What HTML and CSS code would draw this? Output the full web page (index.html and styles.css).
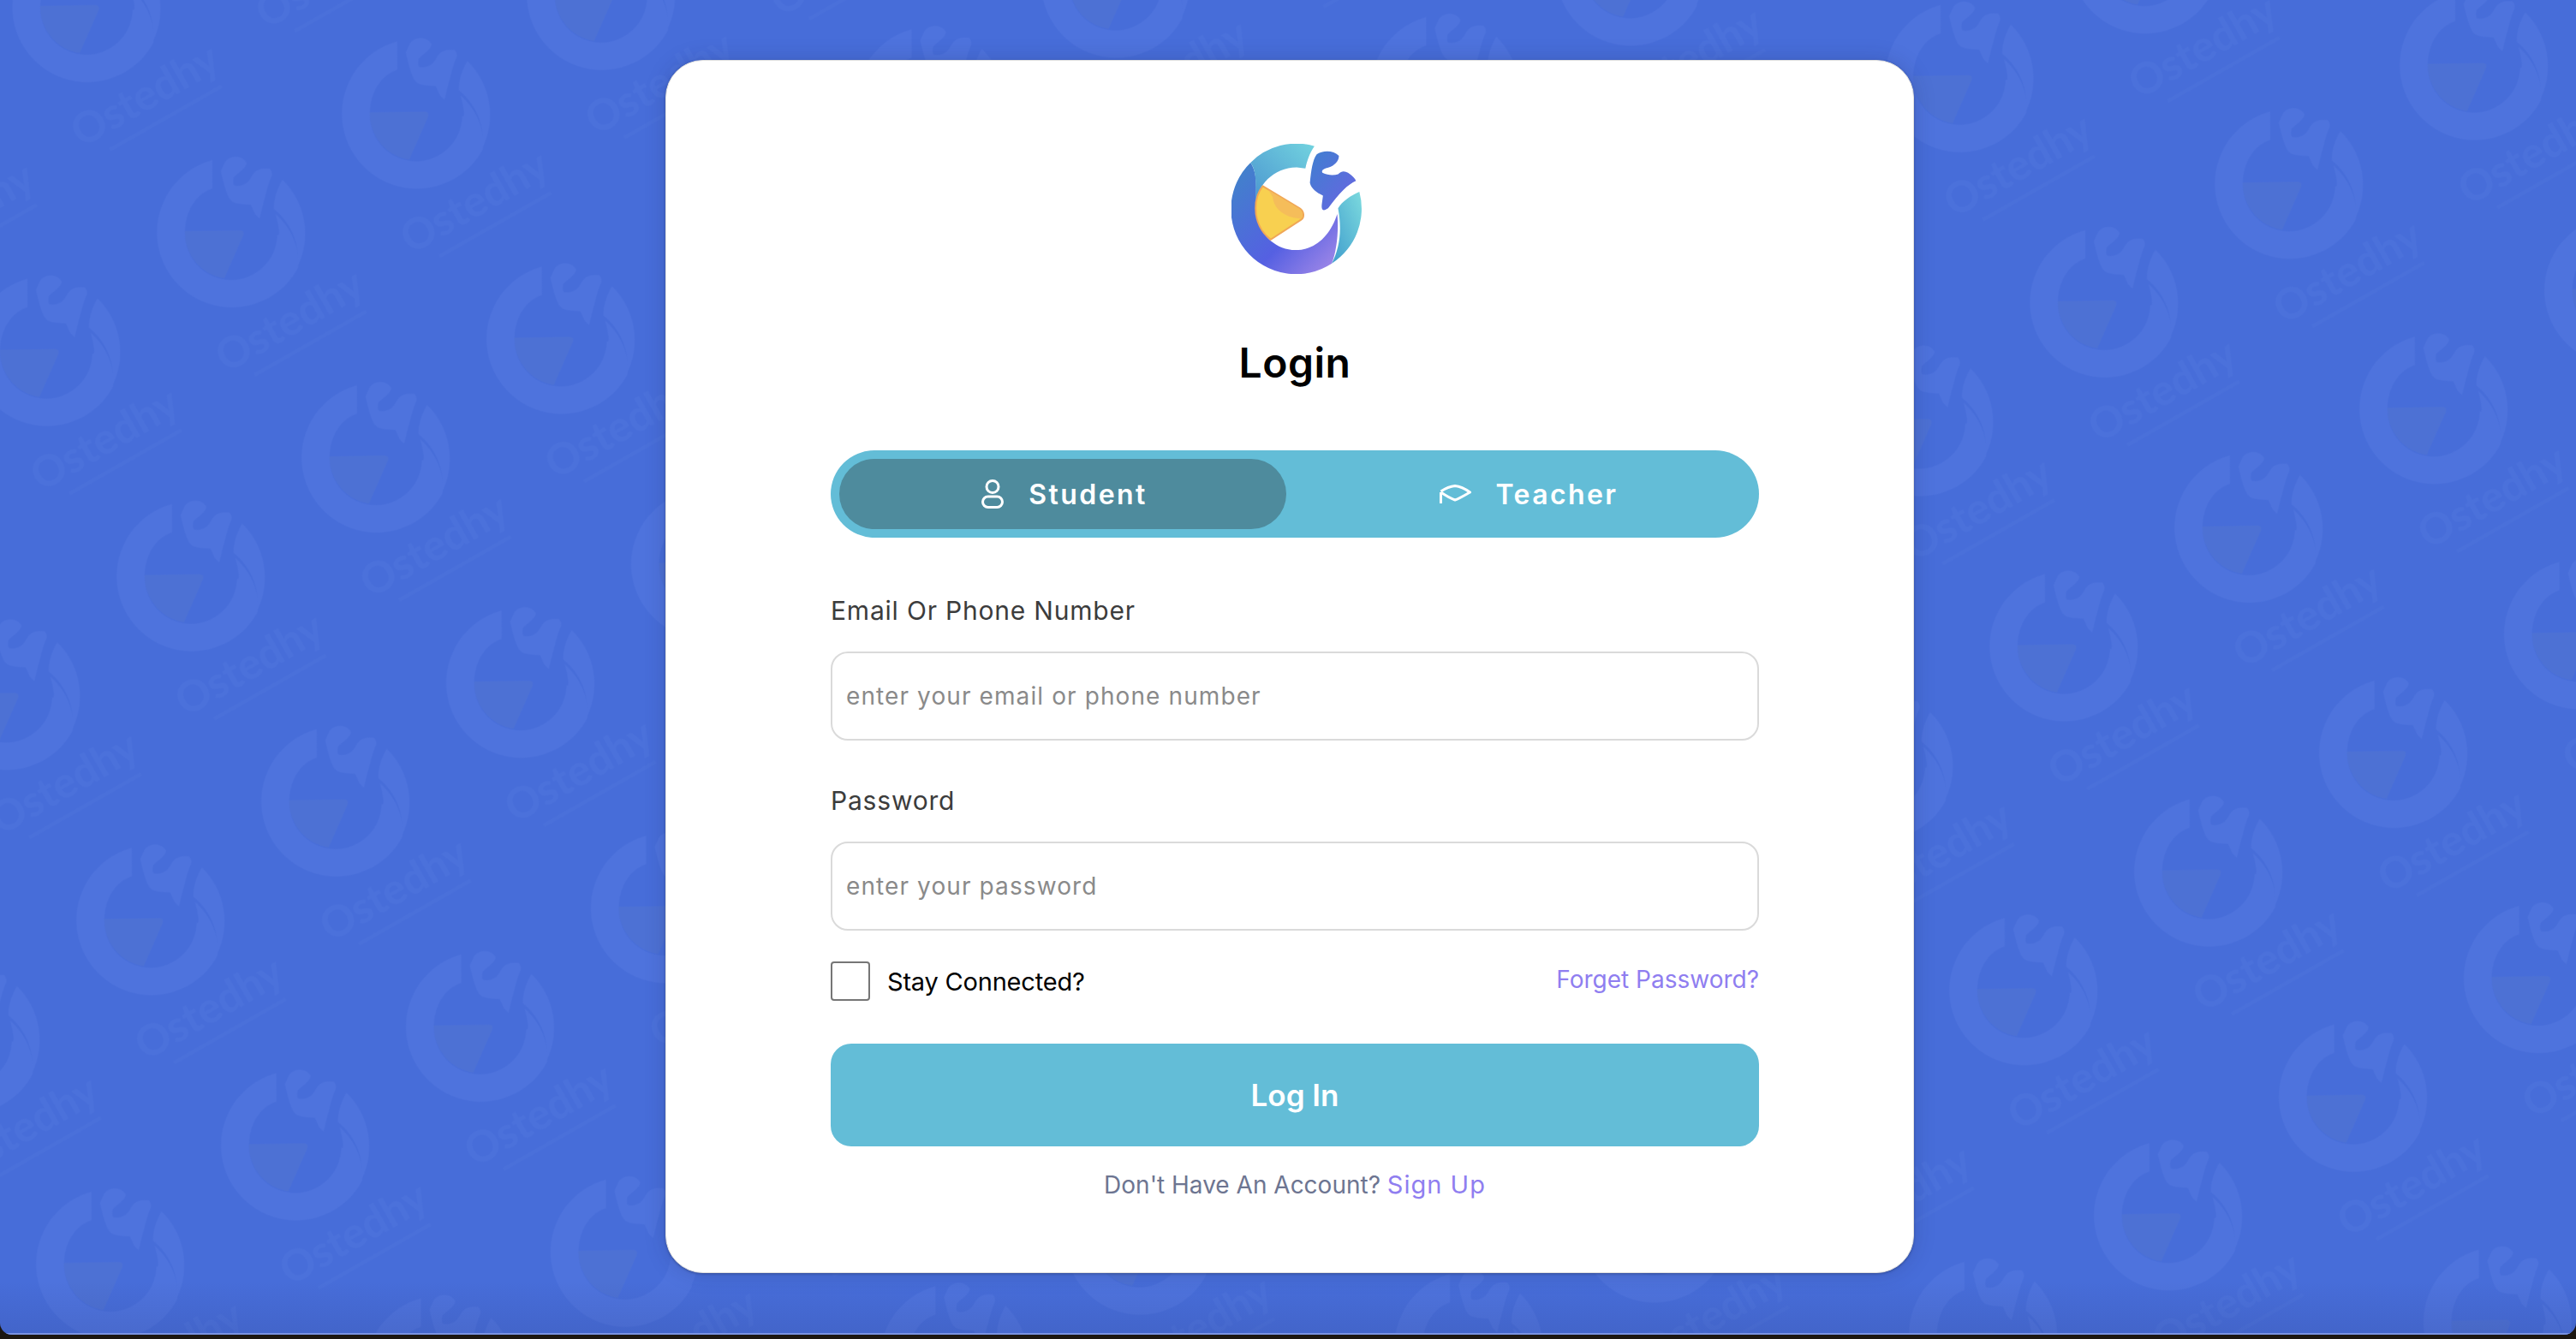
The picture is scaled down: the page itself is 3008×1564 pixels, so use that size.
FILE: index.html
```html
<!DOCTYPE html>
<html lang="en">
<head>
<meta charset="utf-8">
<title>Login</title>
<link rel="stylesheet" href="styles.css">
</head>
<body>
<div class="screen">
  <svg class="wallpaper" width="3008" height="1560" aria-hidden="true">
    <defs>
      <pattern id="wm" patternUnits="userSpaceOnUse" width="256.6" height="312.6" patternTransform="translate(109 256.5) rotate(-32.7)">
        <g transform="translate(127 100) rotate(32.7)">
          <path class="wm-a" d="M-22 -85 A87.500 87.500 0 1 0 78 41 C80 25 76 0 52 -22 C58 0 56 5 54 2 A54 54 0 0 1 -54 0 C-54 -25 -42 -45 -22 -52 Z"/>
          <path class="wm-a" d="M60 -62 A87.500 87.500 0 0 1 78 38 C80 15 72 -10 50 -28 C50 -40 54 -52 60 -62 Z"/>
          <path class="wm-a" d="M-7 -83 C-2 -90 12 -92 18 -82 C18 -76 8 -70 3 -65 C2 -60 2 -55 5 -55 C14 -54 20 -58 24 -66 C28 -74 34 -76 45 -75 C48 -72 48 -68 47 -66 C42 -55 38 -35 33 -17 L28 -22 L23 -33 C10 -33 2 -35 0 -38 C-6 -44 -10 -65 -12 -72 Z"/>
          <path class="wm-b" d="M-54 -2 L10 -3 Q16 -3 14 3 L-8 53 A54 54 0 0 1 -54 -2 Z"/>
        </g>
        <g transform="rotate(3 129 226)">
          <text class="wm-word" x="129" y="240" text-anchor="middle">Ostedhy</text>
          <rect class="wm-line" x="62" y="256" width="150" height="4"/>
        </g>
      </pattern>
      <linearGradient id="c1" x1="0" y1="0" x2="1" y2="1">
        <stop offset="0" stop-color="#3f86c8"/><stop offset=".6" stop-color="#5560e2"/><stop offset="1" stop-color="#a88ce8"/>
      </linearGradient>
      <linearGradient id="c2" x1="1" y1="0" x2="0" y2="1">
        <stop offset="0" stop-color="#72d3df"/><stop offset="1" stop-color="#4a93cf"/>
      </linearGradient>
      <linearGradient id="c3" x1="0" y1="0" x2="1" y2="1">
        <stop offset="0" stop-color="#3f7fd0"/><stop offset="1" stop-color="#6a64e2"/>
      </linearGradient>
      <linearGradient id="c4" x1="1" y1="0" x2="0" y2="1">
        <stop offset="0" stop-color="#7cdade"/><stop offset="1" stop-color="#3f9ccd"/>
      </linearGradient>
    </defs>
    <rect class="wall-fill" width="3008" height="1560"/>
    <rect width="3008" height="1560" fill="url(#wm)"/>
  </svg>
  <main class="card">
    <svg class="logo" width="152" height="152" viewBox="290 113 458 458" aria-hidden="true">
      <path fill="url(#c1)" d="M357 179 A229 229 0 0 0 643 534 C660 490 668 420 662 360 C640 430 590 487 515 487 C440 487 375 420 375 340 C375 280 385 220 357 179 Z"/>
      <path fill="url(#c2)" d="M582 121 A229 229 0 0 0 357 179 C385 215 372 290 375 330 C378 260 440 195 520 196 L550 200 C555 175 565 145 582 121 Z"/>
      <path fill="url(#c4)" d="M740 282 A229 229 0 0 1 643 534 C670 480 680 420 665 340 C680 315 710 295 740 282 Z"/>
      <path fill="url(#c3)" d="M590 150 C610 135 650 135 668 155 C668 175 650 190 635 195 C615 200 605 205 610 215 C630 225 650 225 665 220 C680 205 690 210 700 215 C715 225 725 235 728 243 C700 255 670 285 630 340 C615 350 605 350 608 325 L612 295 C590 285 570 270 566 250 C570 210 575 170 590 150 Z"/>
      <path fill="#f8d050" stroke="#f0a757" stroke-width="6" d="M400 262 L530 340 C545 350 548 372 535 380 L428 450 C395 425 375 385 375 340 C375 305 385 280 400 262 Z"/>
      <path fill="#f5bd5a" d="M420 276 L530 342 C542 350 544 368 534 376 C490 376 440 350 435 300 Z"/>
    </svg>
    <h1 class="title">Login</h1>
    <div class="role-switch">
      <button class="role role-active" type="button">
        <svg class="role-icon" width="26" height="34" viewBox="0 0 26 34" aria-hidden="true">
          <circle cx="13" cy="8.500" r="7"/>
          <rect x="1.500" y="20" width="23" height="12.500" rx="6.200"/>
        </svg>
        <span>Student</span>
      </button>
      <button class="role role-right" type="button">
        <svg class="role-icon" width="37" height="22" viewBox="0 0 37 22" aria-hidden="true">
          <path d="M1.500 8 C6 5 13 2 18 1.500 C24 2 30 5 35.500 9 C30 12 24 16 18 18 C12 16 6 12 1.500 9 M1.500 9 V22"/>
        </svg>
        <span>Teacher</span>
      </button>
    </div>
    <label class="field-label field-label-first" for="email">Email Or Phone Number</label>
    <input class="field" id="email" type="text" placeholder="enter your email or phone number">
    <label class="field-label" for="pass">Password</label>
    <input class="field" id="pass" type="password" placeholder="enter your password">
    <div class="options">
      <label class="stay"><span class="box"></span><span>Stay Connected?</span></label>
      <a class="link forgot" href="#">Forget Password?</a>
    </div>
    <button class="submit" type="button">Log In</button>
    <p class="signup">Don't Have An Account? <a class="link signup-link" href="#">Sign Up</a></p>
  </main>
</div>
</body>
</html>
```
FILE: styles.css
```css
* { box-sizing: border-box; }
html, body { margin: 0; height: 100%; background: #1c1712; }
body { font-family: "Inter", sans-serif; overflow: hidden; }
.screen {
  position: relative;
  width: 3008px;
  height: 1559px;
  overflow: hidden;
  border-radius: 0 0 14px 14px;
  display: flex;
  align-items: flex-start;
  padding: 70px 0 0 777px;
}
.screen::after {
  content: "";
  position: absolute;
  left: 0; right: 0; bottom: 0;
  height: 60px;
  background: linear-gradient(to bottom, rgba(40,50,110,0), rgba(40,50,110,.14));
  border-bottom: 2px solid #7a93e2;
  pointer-events: none;
}
.wallpaper { position: absolute; left: 0; top: 0; }
.wall-fill { fill: #476dd9; }
.wm-a { fill: #4e73dd; }
.wm-b { fill: #4d71d4; }
.wm-word { font: 700 50px "Lato", sans-serif; fill: #4b71db; }
.wm-line { fill: #4a70da; }
.card {
  position: relative;
  width: 1458px;
  height: 1417px;
  background: #fff;
  border-radius: 44px;
  border: 1px solid #e0e0e0;
  box-shadow: 0 1px 3px rgba(0,0,0,.25), 0 0 24px rgba(30,40,90,.22);
  padding: 97px 180px 0 192px;
  display: flex;
  flex-direction: column;
}
.logo { align-self: center; display: block; margin-left: 3px; flex: none; }
.title {
  margin: 72px 0 0;
  text-align: center;
  font: 600 48px/64px "Inter", sans-serif;
  letter-spacing: .5px;
  color: #000;
  height: 64px;
}
.role-switch {
  margin-top: 70px;
  height: 102px;
  flex: none;
  border-radius: 51px;
  background: #63bdd7;
  padding: 10px;
  display: grid;
  grid-template-columns: 522px 1fr;
}
.role {
  border: 0;
  background: none;
  color: #fff;
  font: 600 32px "Inter", sans-serif;
  letter-spacing: 2.4px;
  border-radius: 41px;
  display: flex;
  align-items: center;
  justify-content: center;
  gap: 29px;
  padding: 0;
}
.role-right { padding-left: 24px; }
.role-active { background: #4e8b9d; padding-left: 4px; }
.role-icon { fill: none; stroke: #fff; stroke-width: 3; display: block; }
.field-label {
  display: block;
  margin-top: 50px;
  font: 400 30px/40px "Inter", sans-serif;
  letter-spacing: .8px;
  color: #3c3c3c;
}
.field-label-first { margin-top: 65px; }
.field {
  display: block;
  flex: none;
  width: 100%;
  height: 104px;
  margin-top: 28px;
  border: 2px solid #dadada;
  border-radius: 20px;
  padding: 0 16px;
  font: 400 28px "Inter", sans-serif;
  letter-spacing: 1.1px;
  background: #fff;
}
.field::placeholder { color: #8a8a8a; opacity: 1; }
.options {
  display: flex;
  flex: none;
  justify-content: space-between;
  align-items: center;
  margin-top: 36px;
  height: 46px;
}
.stay {
  display: flex;
  align-items: center;
  gap: 20px;
  font: 400 29px "Inter", sans-serif;
  letter-spacing: -.2px;
  color: #000;
}
.box {
  width: 46px;
  height: 46px;
  border: 2px solid #767676;
  border-radius: 4px;
  display: block;
}
.link { text-decoration: none; color: #8f7ef0; }
.forgot { font: 400 28px "Inter", sans-serif; position: relative; top: -2px; }
.submit {
  margin-top: 50px;
  height: 120px;
  flex: none;
  border: 0;
  border-radius: 24px;
  background: #63bdd7;
  color: #fff;
  font: 600 35px "Inter", sans-serif;
}
.signup {
  margin: 25px 0 0;
  text-align: center;
  font: 400 28px/40px "Inter", sans-serif;
  color: #6d7591;
}
.signup-link { font-size: 29px; letter-spacing: 1px; }
```
